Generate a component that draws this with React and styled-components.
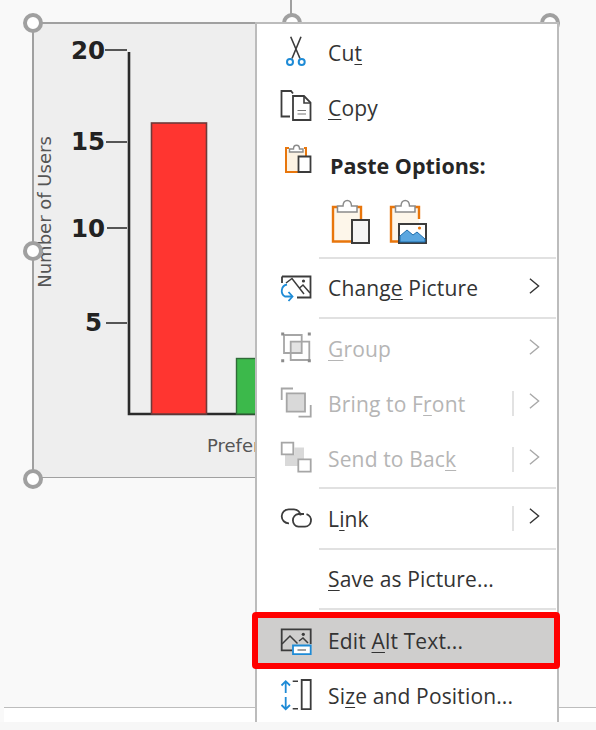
import React from "react";
import styled, { createGlobalStyle } from "styled-components";

const GlobalStyle = createGlobalStyle`
  html, body {
    margin: 0;
    padding: 0;
    background: #f8f8f8;
  }
`;

const GRAY = "#a6a6a6";
const DARK = "#3c3c3c";
const BLUE = "#1e8bd6";
const ORANGE = "#e8760c";

const Icon = ({ children }) => (
  <IconBox viewBox="0 0 36 36" fill="none" strokeWidth="1.6">
    {children}
  </IconBox>
);

const CutIcon = () => (
  <Icon>
    <path d="M12.7 1.7 22 23.5M23 1.7 14 23.5" stroke={DARK} />
    <circle cx="12" cy="27" r="3" stroke={BLUE} strokeWidth="2" />
    <circle cx="23.7" cy="27" r="3" stroke={BLUE} strokeWidth="2" />
  </Icon>
);

const CopyIcon = () => (
  <Icon>
    <path d="M12 26.5H3.5V1H13L15 3.5" stroke={DARK} strokeWidth="1.8" />
    <path d="M15 6H26L32.5 12.5V30H15Z" stroke={DARK} strokeWidth="1.8" />
    <path d="M26 6V13H32.5" stroke={DARK} />
    <path d="M19.5 20.5H28M19.5 24H28" stroke="#777" strokeWidth="1.2" />
  </Icon>
);

const PasteSmallIcon = () => (
  <Icon>
    <path d="M8 3H28V25H8Z" fill="#fdf3e3" />
    <path d="M11 1H8V25H20M26 1H28V9" stroke={ORANGE} strokeWidth="2" />
    <path d="M11.5 5V2H15.5C15.5-3 21.5-3 21.5 2H25V5Z" fill="#fff" stroke="#8a8a8a" strokeWidth="1.4" />
    <path d="M20.5 9.5H32.5V25H20.5Z" fill="#fff" stroke={DARK} strokeWidth="1.8" />
  </Icon>
);

const Clipboard = () => (
  <>
    <path d="M3 8H31V42H3Z" fill="#fdf6ea" />
    <path d="M7 8H3V42.5H22M27 8H31V20" stroke={ORANGE} strokeWidth="2.4" />
    <path d="M7.5 13V7H13C13 -0.5 21.5 -0.5 21.5 7H27V13Z" fill="#fff" stroke="#8a8a8a" strokeWidth="1.5" />
  </>
);

const ChangePictureIcon = () => (
  <Icon>
    <path d="M4 6.5H32.5V27.5H19" stroke={DARK} strokeWidth="1.8" />
    <path d="M4 6.5V13" stroke={DARK} strokeWidth="1.8" />
    <path d="M8 13 14 8.5 26 24M21 18.5 25 15 32 23" stroke={DARK} strokeWidth="1.5" />
    <circle cx="25.5" cy="11" r="1.6" fill={DARK} />
    <path d="M9 14.5A6.5 6.5 0 0 0 7 26.5 H14" stroke={BLUE} strokeWidth="1.8" />
    <path d="M10.5 22 14.5 26.5 10.5 31" stroke={BLUE} strokeWidth="1.8" />
  </Icon>
);

const GroupIcon = () => (
  <Icon>
    <path d="M12.7 10.7H23.7V22H12.7Z" fill="#e3e3e3" />
    <path d="M6 4H23.7V22H6Z" stroke={GRAY} strokeWidth="1.8" />
    <path d="M12.7 10.7H31.3V29H12.7Z" stroke={GRAY} strokeWidth="1.8" />
    <path d="M3.2 1.5h3v3h-3ZM29.8 1.5h3v3h-3ZM3.2 28.2h3v3h-3ZM29.8 28.2h3v3h-3Z" fill="#8c8c8c" />
  </Icon>
);

const BringFrontIcon = () => (
  <Icon>
    <path d="M15 2.5H3.7V14M32.7 19V30.7H20.5" stroke={GRAY} strokeWidth="1.8" />
    <path d="M8.7 7.3H27V25.7H8.7Z" fill="#d9d9d9" stroke={GRAY} strokeWidth="1.8" />
  </Icon>
);

const SendBackIcon = () => (
  <Icon>
    <path d="M16.5 6.5H26V18H20V25H7V14H16.5Z" fill="#d9d9d9" />
    <path d="M3.7 1.7H15.3V13.3H3.7Z" fill="#fff" stroke={GRAY} strokeWidth="1.8" />
    <path d="M20.3 18.3H32.7V30.7H20.3Z" fill="#fff" stroke={GRAY} strokeWidth="1.8" />
  </Icon>
);

const LinkIcon = () => (
  <Icon>
    <path d="M11 22.3H10.7A7 7 0 0 1 10.7 8.3H16A6.6 6.6 0 0 1 22.5 14.5" stroke={DARK} strokeWidth="1.8" />
    <path d="M26 13H20.5A6.4 6.4 0 0 0 20.5 25.7H27A6.4 6.4 0 0 0 28.5 13.2" stroke={DARK} strokeWidth="1.8" />
  </Icon>
);

const AltTextIcon = () => (
  <Icon>
    <path d="M14 27.3H3.7V6.3H32.7V21" stroke={DARK} strokeWidth="1.8" />
    <path d="M4 21 12 13 19.5 20.5M21 18 25 15 30 20" stroke={DARK} strokeWidth="1.5" />
    <circle cx="25.3" cy="11.3" r="1.6" fill={DARK} />
    <path d="M15 22.5H32.7V31.2H15Z" fill="#fff" stroke={BLUE} strokeWidth="1.8" />
    <path d="M19.5 27H28" stroke="#777" strokeWidth="1.4" />
  </Icon>
);

const SizeIcon = () => (
  <Icon>
    <path d="M7.7 15V3.5M3.5 7.5 7.7 3.2 12 7.5M7.7 19V31M3.5 27 7.7 31.2 12 27" stroke={BLUE} strokeWidth="1.8" />
    <path d="M14.7 3.3H20M14.7 30.7H20" stroke={DARK} strokeWidth="1.6" />
    <path d="M23.7 2H32.7V31.2H23.7Z" stroke={DARK} strokeWidth="1.8" />
  </Icon>
);

const Chart = () => (
  <ChartSvg viewBox="32 22 517 456" fill="none">
    <rect x="33" y="23" width="516" height="455" fill="#eeeeee" stroke="#a0a0a0" strokeWidth="2" />
    <path d="M105 50H127M106 142H127M107 228H127M106 323H127" stroke="#555" strokeWidth="2" />
    <path d="M129 52V414H260" stroke="#2a2a2a" strokeWidth="2.6" />
    <rect x="151.5" y="123" width="55" height="291" fill="#ff3530" stroke="#6e3a3a" strokeWidth="1.6" />
    <rect x="236.5" y="358.5" width="40" height="55.5" fill="#3cb94b" stroke="#2f6b38" strokeWidth="1.4" />
    <ChartNumber x="105" y="59">20</ChartNumber>
    <ChartNumber x="105" y="150">15</ChartNumber>
    <ChartNumber x="105" y="237">10</ChartNumber>
    <ChartNumber x="102" y="331">5</ChartNumber>
    <ChartLabel transform="translate(51 212) rotate(-90)" textAnchor="middle">Number of Users</ChartLabel>
    <ChartLabel x="207" y="452">Preference</ChartLabel>
  </ChartSvg>
);

const Row = ({ icon, label, disabled, divider, arrow, height = 55, top = 0 }) => (
  <MenuRow $height={height} $top={top}>
    <IconSlot>{icon}</IconSlot>
    <RowLabel $disabled={disabled}>{label}</RowLabel>
    {divider && <RowDivider />}
    {arrow && (
      <Chevron viewBox="0 0 12 18" fill="none" $disabled={disabled}>
        <path d="M1 1 10.5 9 1 17" stroke="currentColor" strokeWidth="1.5" />
      </Chevron>
    )}
  </MenuRow>
);

export default function App() {
  return (
    <Page>
      <GlobalStyle />
      <RotateStem />
      <Picture>
        <Chart />
        <Handle $x="0%" $y="0%" />
        <Handle $x="50%" $y="0%" />
        <Handle $x="100%" $y="0%" />
        <Handle $x="0%" $y="50%" />
        <Handle $x="0%" $y="100%" />
      </Picture>
      <SlideFoot />
      <BottomStrip />

      <Menu>
        <Row icon={<CutIcon />} label={<>Cu<u>t</u></>} />
        <Row icon={<CopyIcon />} label={<><u>C</u>opy</>} />
        <PasteHeader>
          <IconSlot><PasteSmallIcon /></IconSlot>
          <PasteTitle>Paste Options:</PasteTitle>
        </PasteHeader>
        <PasteRow>
          <PasteIcon viewBox="0 0 42 48" fill="none">
            <Clipboard />
            <path d="M22 21H39V44H22Z" fill="#f5f5f5" stroke={DARK} strokeWidth="2" />
          </PasteIcon>
          <PasteIcon viewBox="0 0 42 48" fill="none">
            <Clipboard />
            <path d="M11 25H38V44H11Z" fill="#fff" stroke={DARK} strokeWidth="2" />
            <path d="M12 42V37L19 31 25 36 29 33 37 40V43H12Z" fill="#5ba7e0" stroke="#1f6fae" strokeWidth="1" />
            <circle cx="31.5" cy="29" r="1.6" fill={ORANGE} />
          </PasteIcon>
        </PasteRow>
        <Separator />
        <Row height={58} icon={<ChangePictureIcon />} label={<>Chang<u>e</u> Picture</>} arrow />
        <Separator />
        <Row height={57} top={3} icon={<GroupIcon />} label={<><u>G</u>roup</>} disabled arrow />
        <Row icon={<BringFrontIcon />} label={<>Bring to F<u>r</u>ont</>} disabled divider arrow />
        <Row height={56} icon={<SendBackIcon />} label={<>Send to Bac<u>k</u></>} disabled divider arrow />
        <Separator />
        <Row height={59} icon={<LinkIcon />} label={<>L<u>i</u>nk</>} divider arrow />
        <Separator />
        <Row height={58} label={<><u>S</u>ave as Picture...</>} />
        <Separator />
        <HighlightRow>
          <Row height={45} icon={<AltTextIcon />} label={<>Edit <u>A</u>lt Text...</>} />
          <RedMark />
        </HighlightRow>
        <Row height={60} top={5} icon={<SizeIcon />} label={<>Si<u>z</u>e and Position...</>} />
      </Menu>
    </Page>
  );
}

const Page = styled.div`
  position: relative;
  display: flex;
  flex-direction: column;
  width: 596px;
  height: 730px;
  overflow: hidden;
  background: #f9f9f9;
  font-family: "Open Sans", "Noto Sans", sans-serif;
`;

const RotateStem = styled.div`
  position: absolute;
  left: 290px;
  top: 0;
  width: 2px;
  height: 14px;
  background: #a0a0a0;
`;

const Picture = styled.div`
  position: relative;
  width: 517px;
  height: 456px;
  margin: 22px 0 0 32px;
  flex: none;
`;

const ChartSvg = styled.svg`
  display: block;
  width: 517px;
  height: 456px;
`;

const ChartNumber = styled.text`
  font-family: "DejaVu Sans", sans-serif;
  font-weight: 700;
  font-size: 24.5px;
  fill: #222222;
  text-anchor: end;
`;

const ChartLabel = styled.text`
  font-family: "DejaVu Sans", sans-serif;
  font-size: 18px;
  fill: #555555;
`;

const Handle = styled.span`
  position: absolute;
  left: ${(p) => p.$x};
  top: ${(p) => p.$y};
  width: 20px;
  height: 20px;
  margin: -9px 0 0 -9px;
  box-sizing: border-box;
  border: 4px solid #a0a0a0;
  border-radius: 50%;
  background: #ffffff;
`;

const SlideFoot = styled.div`
  height: 14px;
  margin: 229px 0 0 4px;
  border-top: 1px solid #bdbdbd;
  background: #ffffff;
  flex: none;
`;

const BottomStrip = styled.div`
  flex: 1;
  background: #f7f7f7;
`;

const Menu = styled.div`
  position: absolute;
  left: 255px;
  top: 22px;
  width: 304px;
  height: 700px;
  box-sizing: border-box;
  padding-top: 1px;
  border: solid #bcbcbc;
  border-width: 2px 2px 0 2px;
  background: #ffffff;
  display: flex;
  flex-direction: column;
`;

const MenuRow = styled.div`
  display: flex;
  align-items: center;
  width: 100%;
  height: ${(p) => p.$height}px;
  padding: ${(p) => p.$top}px 0 0 21px;
  box-sizing: border-box;
  flex: none;
`;

const IconSlot = styled.div`
  width: 36px;
  height: 36px;
  margin-right: 14px;
  flex: none;
`;

const IconBox = styled.svg`
  display: block;
  width: 36px;
  height: 36px;
  overflow: visible;
`;

const RowLabel = styled.span`
  flex: 1;
  font-size: 21px;
  letter-spacing: 0.15px;
  color: ${(p) => (p.$disabled ? "#b5b5b5" : "#333333")};
  white-space: nowrap;

  u {
    text-underline-offset: 3px;
    text-decoration-thickness: 1px;
  }
`;

const RowDivider = styled.span`
  width: 2px;
  height: 25px;
  margin-right: 15px;
  background: #e2e2e2;
`;

const Chevron = styled.svg`
  width: 11px;
  height: 18px;
  margin: -5px 17px 0 0;
  flex: none;
  color: ${(p) => (p.$disabled ? "#a8a8a8" : "#333333")};
`;

const PasteHeader = styled.div`
  display: flex;
  align-items: center;
  height: 60px;
  padding-left: 21px;
  flex: none;
`;

const PasteTitle = styled.span`
  margin-left: 2px;
  font-size: 21.5px;
  font-weight: 700;
  color: #262626;
`;

const PasteRow = styled.div`
  display: flex;
  gap: 16px;
  height: 62px;
  padding: 4px 0 0 73px;
  box-sizing: border-box;
  flex: none;
`;

const PasteIcon = styled.svg`
  display: block;
  width: 42px;
  height: 48px;
  overflow: visible;
`;

const Separator = styled.div`
  height: 2px;
  margin: 0 1px 0 62px;
  background: #e1e1e1;
  flex: none;
`;

const HighlightRow = styled.div`
  position: relative;
  background: #cfcecd;
  margin-top: 8px;
  height: 45px;
  flex: none;
`;

const RedMark = styled.div`
  position: absolute;
  left: -5px;
  right: -3px;
  top: -6px;
  bottom: -6px;
  border: 6px solid #ff0000;
  border-radius: 4px;
`;
